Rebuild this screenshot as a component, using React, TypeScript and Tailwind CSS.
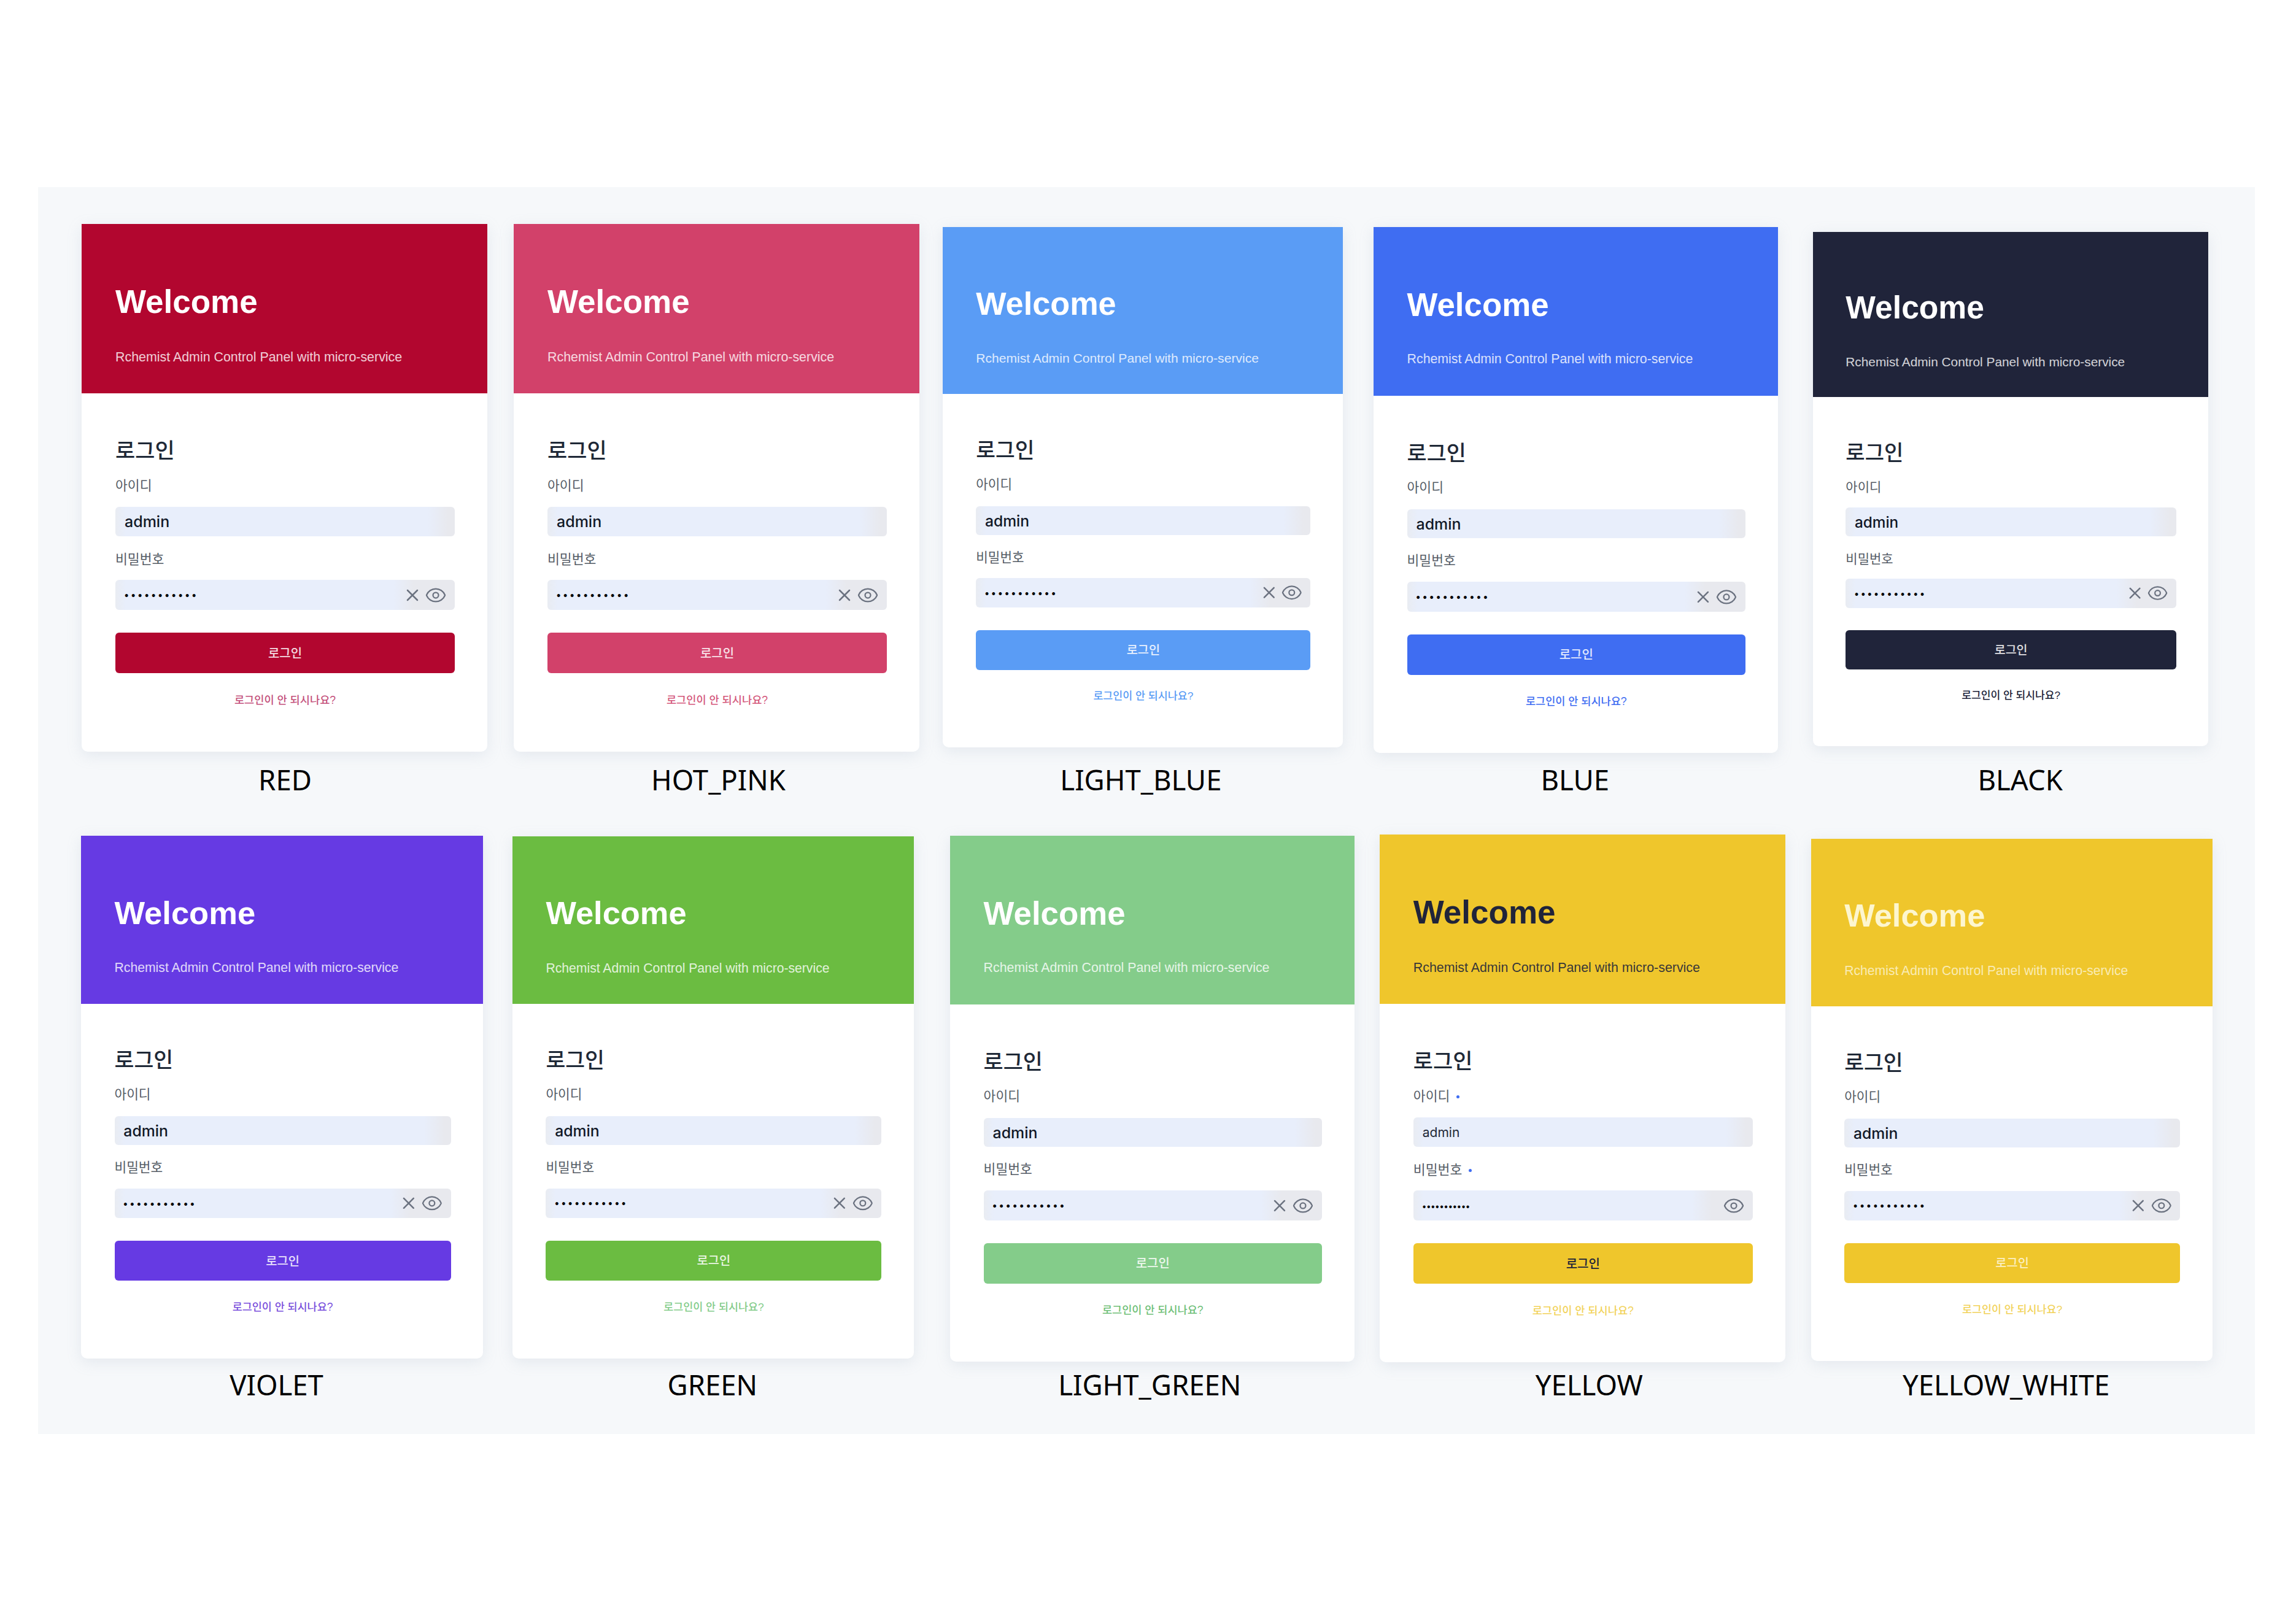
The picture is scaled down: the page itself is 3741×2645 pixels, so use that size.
import React from 'react';
import { Eye, X } from 'lucide-react';

const KOREAN = "font-['Liberation_Sans','Noto_Sans_CJK_KR',sans-serif]";

type Theme = {
  name: string;
  item: string; // place of the screenshot inside its row
  zoom: string;
  label: string;
  header: string;
  title: string;
  subtitle: string;
  button: string;
  link: string;
  required?: boolean;
};

const TOP_ROW: Theme[] = [
  { name: 'RED', item: 'ml-[71px] pt-[60px]', zoom: '[zoom:1]', label: 'pl-[2px]', header: 'bg-[#b2062f]', title: 'text-white', subtitle: 'text-white/80', button: 'bg-[#b2062f] text-white/85', link: 'text-[#c4517c]' },
  { name: 'HOT_PINK', item: 'ml-[43px] pt-[60px]', zoom: '[zoom:1]', label: 'pl-[6px]', header: 'bg-[#d2416a]', title: 'text-white', subtitle: 'text-white/80', button: 'bg-[#d2416a] text-white/85', link: 'text-[#d4587c]' },
  { name: 'LIGHT_BLUE', item: 'ml-[38px] pt-[65px]', zoom: '[zoom:0.986]', label: 'pr-[6px]', header: 'bg-[#5a9cf5]', title: 'text-white', subtitle: 'text-white/80', button: 'bg-[#5a9cf5] text-white/85', link: 'text-[#5a9cf5]' },
  { name: 'BLUE', item: 'ml-[50px] pt-[65px]', zoom: '[zoom:0.997]', label: 'pr-[2px]', header: 'bg-[#3f6df2]', title: 'text-white', subtitle: 'text-white/80', button: 'bg-[#3f6df2] text-white/85', link: 'text-[#3f6df2]' },
  { name: 'BLACK', item: 'ml-[57px] pt-[73px]', zoom: '[zoom:0.974]', label: 'pl-[32px]', header: 'bg-[#20243a]', title: 'text-white', subtitle: 'text-white/80', button: 'bg-[#20243a] text-white/85', link: 'text-[#20243a]' },
];

const BOTTOM_ROW: Theme[] = [
  { name: 'VIOLET', item: 'ml-[70px] pt-[62px]', zoom: '[zoom:0.991]', label: 'pr-[18px]', header: 'bg-[#663ae3]', title: 'text-white', subtitle: 'text-white/80', button: 'bg-[#663ae3] text-white/85', link: 'text-[#7a50dc]' },
  { name: 'GREEN', item: 'ml-[48px] pt-[63px]', zoom: '[zoom:0.989]', label: 'pr-[2px]', header: 'bg-[#6bbc41]', title: 'text-white', subtitle: 'text-white/80', button: 'bg-[#6bbc41] text-white/85', link: 'text-[#84cc8a]' },
  { name: 'LIGHT_GREEN', item: 'ml-[59px] pt-[62px]', zoom: '[zoom:0.997]', label: 'pr-[8px]', header: 'bg-[#84cc8a]', title: 'text-white', subtitle: 'text-white/80', button: 'bg-[#84cc8a] text-white/85', link: 'text-[#6fc078]' },
  { name: 'YELLOW', item: 'ml-[41px] pt-[60px]', zoom: '[zoom:1]', label: 'pl-[22px]', header: 'bg-[#efc62c]', title: 'text-[#20243a]', subtitle: 'text-[#20243a]/90', button: 'bg-[#efc62c] text-[#20243a]', link: 'text-[#f2d35c]', required: true },
  { name: 'YELLOW_WHITE', item: 'ml-[42px] pt-[67px]', zoom: '[zoom:0.989]', label: 'pr-[18px]', header: 'bg-[#efc62c]', title: 'text-[#fdf6cf]', subtitle: 'text-[#f9ebb4]', button: 'bg-[#efc62c] text-[#fbefc0]', link: 'text-[#f2d35c]' },
];

function FieldLabel({ text, required, className }: { text: string; required?: boolean; className: string }) {
  return (
    <div className={`flex items-center gap-[11px] text-[21.6px] leading-[28px] text-[#555c66] ${className}`}>
      <span>{text}</span>
      {required && <span className="h-[5px] w-[5px] rounded-full bg-[#3f6df2]" />}
    </div>
  );
}

function LoginCard({ theme }: { theme: Theme }) {
  const small = theme.required;
  return (
    <div className={`h-[860px] w-[661px] overflow-hidden rounded-b-[10px] bg-white shadow-[0_6px_24px_rgba(150,165,190,0.18)] ${theme.zoom} ${KOREAN}`}>
      <div className={`h-[276px] pt-[97px] pr-[53px] pl-[55px] ${theme.header}`}>
        <div className={`text-[53px] leading-[60px] font-bold ${theme.title}`}>Welcome</div>
        <div className={`mt-[46px] text-[21.4px] leading-[28px] ${theme.subtitle}`}>
          Rchemist Admin Control Panel with micro-service
        </div>
      </div>

      <div className="pt-[72px] pr-[53px] pl-[55px]">
        <div className="text-[35px] leading-[44px] font-medium text-[#1f2937]">로그인</div>

        <FieldLabel text="아이디" required={theme.required} className="mt-[21px]" />
        <div className="mt-[20px] flex h-[48px] items-center rounded-[6px] bg-[linear-gradient(90deg,#e9ecf2_0%,#e8eefb_3%,#e8eefb_92%,#e8e9ee_98%)] px-[15px]">
          <span className={small ? "pt-[2px] font-['Inter'] text-[21px] text-[#1f2937]" : "pt-[2px] font-['Inter'] text-[25px] font-medium text-[#111827]"}>admin</span>
        </div>

        <FieldLabel text="비밀번호" required={theme.required} className="mt-[24px]" />
        <div className="mt-[19px] flex h-[49px] items-center justify-between rounded-[6px] bg-[linear-gradient(90deg,#e9ecf2_0%,#e8eefb_3%,#e8eefb_82%,#e8e9ee_88%)] pr-[13px] pl-[15px]">
          <span className={small ? 'pt-[4px] text-[16px] tracking-[1.5px] text-black' : 'pt-[4px] text-[18px] tracking-[4.7px] text-black'}>•••••••••••</span>
          <div className="flex items-center gap-[4px] text-[#6b7280]">
            {!small && <X size={32} strokeWidth={1.9} />}
            <Eye size={36} strokeWidth={1.5} />
          </div>
        </div>

        <div className={`mt-[37px] flex h-[66px] items-center justify-center rounded-[6px] pt-[2px] text-[20px] font-medium ${theme.button}`}>
          로그인
        </div>
        <div className={`mt-[30px] text-center text-[17.6px] leading-[28px] font-medium ${theme.link}`}>
          로그인이 안 되시나요?
        </div>
      </div>
    </div>
  );
}

function Row({ themes, height }: { themes: Theme[]; height: string }) {
  return (
    <div className={`flex ${height}`}>
      {themes.map((theme) => (
        <div key={theme.name} className={`flex flex-col justify-between ${theme.item}`}>
          <LoginCard theme={theme} />
          <div className={`text-center font-['Noto_Sans',sans-serif] text-[45.5px] leading-[60px] text-black ${theme.label}`}>
            {theme.name}
          </div>
        </div>
      ))}
    </div>
  );
}

export default function App() {
  return (
    <div className="h-[2645px] w-[3741px] bg-white pt-[305px] pl-[62px]">
      <div className="h-[2032px] w-[3612px] bg-[#f6f8fa]">
        <Row themes={TOP_ROW} height="h-[995px]" />
        <Row themes={BOTTOM_ROW} height="h-[986px]" />
      </div>
    </div>
  );
}
